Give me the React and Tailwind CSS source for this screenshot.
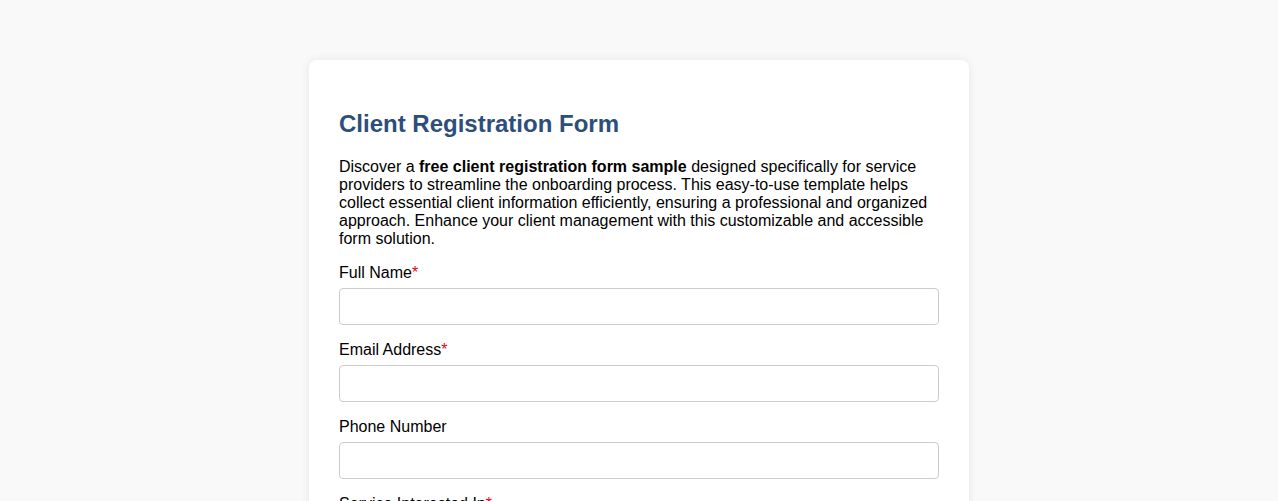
export default function App() {
  const fields = [
    { label: "Full Name", required: true, type: "text" },
    { label: "Email Address", required: true, type: "email" },
    { label: "Phone Number", required: false, type: "tel" },
  ];

  return (
    <div
      className="min-h-screen bg-[#f9f9f9] pt-[60px] pb-10 text-black"
      style={{ fontFamily: '"Liberation Sans", Arial, sans-serif' }}
    >
      <div className="mx-auto w-[660px] rounded-lg bg-white p-[30px] shadow-[0_0_10px_rgba(0,0,0,0.08)]">
        <h1 className="mt-[20px] text-[24px] font-bold leading-[27px] text-[#2c4e7d]">
          Client Registration Form
        </h1>
        <p className="mt-[21px] text-[16px] leading-[18px]">
          Discover a <strong>free client registration form sample</strong>{" "}
          designed specifically for service providers to streamline the
          onboarding process. This easy-to-use template helps collect essential
          client information efficiently, ensuring a professional and organized
          approach. Enhance your client management with this customizable and
          accessible form solution.
        </p>

        <form className="mt-[15px]">
          {fields.map((f) => (
            <div key={f.label} className="mb-[15px]">
              <label className="block pt-px text-[16px] leading-[18px]">
                {f.label}
                {f.required && <span className="text-red-600">*</span>}
              </label>
              <input
                type={f.type}
                className="mt-[6px] block h-[37px] w-full rounded border border-[#cccccc] px-2 text-[16px] outline-none"
              />
            </div>
          ))}
          <div className="mb-[15px]">
            <label className="block pt-px text-[16px] leading-[18px]">
              Service Interested In<span className="text-red-600">*</span>
            </label>
            <select className="mt-[6px] block h-[37px] w-full rounded border border-[#cccccc] px-2 text-[16px]">
              <option>Select a service</option>
            </select>
          </div>
        </form>
      </div>
    </div>
  );
}
